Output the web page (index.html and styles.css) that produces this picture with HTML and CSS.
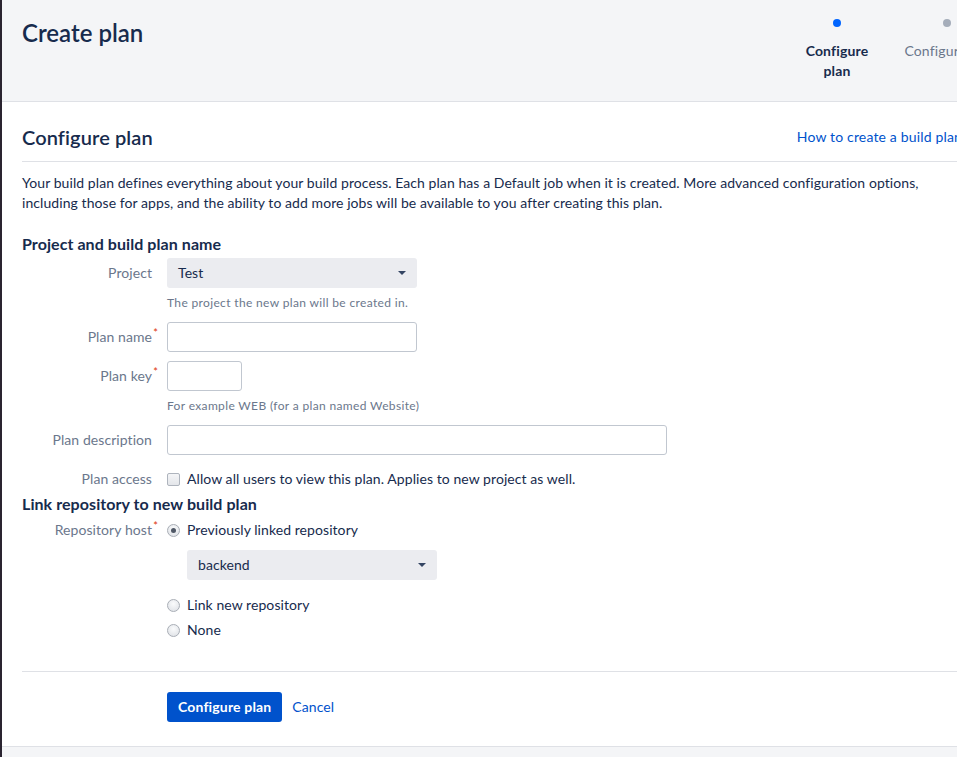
FILE: index.html
```html
<!DOCTYPE html>
<html>
<head>
<meta charset="utf-8">
<link rel="stylesheet" href="styles.css">
</head>
<body>
<div class="frame">
  <div class="page">
    <header class="page-header">
      <h1 class="page-title">Create plan</h1>
      <ol class="steps">
        <li class="step step-current"><span class="step-dot"></span><span class="step-label">Configure plan</span></li>
        <li class="step"><span class="step-dot"></span><span class="step-label">Configure job</span></li>
      </ol>
    </header>
    <main class="panel">
      <div class="panel-head">
        <h2 class="panel-title">Configure plan</h2>
        <a class="link help-link" href="#">How to create a build plan</a>
      </div>
      <p class="intro">Your build plan defines everything about your build process. Each plan has a Default job when it is created. More advanced configuration options, including those for apps, and the ability to add more jobs will be available to you after creating this plan.</p>

      <h3 class="section-title first">Project and build plan name</h3>
      <div class="field field-project">
        <label class="field-label">Project</label>
        <div class="select select-project"><span>Test</span><span class="caret"></span></div>
      </div>
      <div class="help">The project the new plan will be created in.</div>

      <div class="field field-gap">
        <label class="field-label">Plan name<span class="req">*</span></label>
        <div class="input input-long"></div>
      </div>
      <div class="field field-gap">
        <label class="field-label">Plan key<span class="req">*</span></label>
        <div class="input input-short"></div>
      </div>
      <div class="help">For example WEB (for a plan named Website)</div>
      <div class="field field-gap">
        <label class="field-label">Plan description</label>
        <div class="input input-full"></div>
      </div>
      <div class="field field-check">
        <label class="field-label">Plan access</label>
        <div class="choice"><span class="checkbox"></span><span>Allow all users to view this plan. Applies to new project as well.</span></div>
      </div>

      <h3 class="section-title second">Link repository to new build plan</h3>
      <div class="field field-radio-first">
        <label class="field-label">Repository host<span class="req">*</span></label>
        <div class="choice"><span class="radio radio-on"></span><span>Previously linked repository</span></div>
      </div>
      <div class="nested">
        <div class="select select-repo"><span>backend</span><span class="caret"></span></div>
      </div>
      <div class="indent choice choice-link"><span class="radio"></span><span>Link new repository</span></div>
      <div class="indent choice choice-none"><span class="radio"></span><span>None</span></div>

      <div class="actions">
        <button class="btn-primary" type="button">Configure plan</button>
        <a class="link cancel" href="#">Cancel</a>
      </div>
    </main>
    <div class="page-foot"></div>
  </div>
</div>
</body>
</html>
```

FILE: styles.css
```css
html, body {
  margin: 0;
  padding: 0;
  background: #f4f5f7;
  overflow: hidden;
}
body {
  font-family: Lato, "Open Sans", sans-serif;
  font-size: 14px;
  line-height: 20px;
  letter-spacing: 0.07px;
  color: #172b4d;
}
.frame {
  border-left: 2px solid #2a2430;
  height: 757px;
  overflow: hidden;
}
.page {
  width: 1000px;
}
.page-header {
  display: flex;
  align-items: flex-start;
  height: 102px;
  box-sizing: border-box;
  padding: 0 0 0 20px;
  background: #f4f5f7;
  border-bottom: 1px solid #dfe1e6;
}
.page-title {
  margin: 19px 0 0;
  font-size: 24px;
  line-height: 28px;
  font-weight: 600;
  letter-spacing: 0;
  color: #172b4d;
}
.steps {
  margin: 0 0 0 auto;
  padding: 0;
  list-style: none;
  display: flex;
}
.step {
  width: 110px;
  display: flex;
  flex-direction: column;
  align-items: center;
  padding-top: 19px;
  color: #6b778c;
  text-align: center;
  letter-spacing: 0.16px;
}
.step-dot {
  width: 8px;
  height: 8px;
  border-radius: 50%;
  background: #a5adba;
}
.step-label {
  margin-top: 14px;
  width: 88px;
}
.step-current {
  color: #172b4d;
  font-weight: 700;
}
.step-current .step-dot {
  background: #0065ff;
}
.panel {
  background: #fff;
  padding: 0 40px 0 20px;
  height: 645px;
  box-sizing: border-box;
  border-bottom: 1px solid #dfe1e6;
}
.panel-head {
  display: flex;
  align-items: center;
  justify-content: space-between;
  padding-top: 23px;
  padding-bottom: 12px;
  border-bottom: 1px solid #dfe1e6;
}
.panel-title {
  margin: 0;
  font-size: 20px;
  line-height: 24px;
  font-weight: 600;
  letter-spacing: 0.1px;
}
.link {
  color: #0052cc;
  text-decoration: none;
}
.help-link {
  margin-top: 0;
  letter-spacing: 0.16px;
}
.intro {
  margin: 11px 0 0;
}
.section-title {
  margin: 0;
  font-size: 16px;
  line-height: 20px;
  font-weight: 700;
}
.section-title.first { margin-top: 21px; }
.section-title.second { margin-top: 5px; }
.field {
  display: flex;
  align-items: center;
}
.field-label {
  position: relative;
  width: 130px;
  margin-right: 15px;
  text-align: right;
  color: #6b778c;
}
.req {
  position: absolute;
  right: -6px;
  top: -4px;
  color: #de350b;
  font-size: 11px;
}
.field-project { margin-top: 4px; }
.field-gap { margin-top: 9px; }
.field-check { margin-top: 14px; }
.field-radio-first { margin-top: 6px; }
.select {
  height: 30px;
  box-sizing: border-box;
  background: #ebecf0;
  border-radius: 3px;
  display: flex;
  align-items: center;
  justify-content: space-between;
  padding: 0 11px;
  width: 250px;
}
.caret {
  width: 0;
  height: 0;
  border-left: 4px solid transparent;
  border-right: 4px solid transparent;
  border-top: 4px solid #344563;
}
.help {
  margin: 5px 0 0 145px;
  font-size: 12px;
  letter-spacing: 0.35px;
  color: #6b778c;
}
.input {
  height: 30px;
  box-sizing: border-box;
  border: 1px solid #c1c7d0;
  border-radius: 3px;
  background: #fff;
}
.input-long { width: 250px; }
.input-short { width: 75px; }
.input-full { width: 500px; }
.choice {
  display: flex;
  align-items: center;
}
.checkbox {
  width: 11px;
  height: 11px;
  margin-right: 7px;
  border: 1px solid #aeb4bd;
  border-radius: 2px;
  background: linear-gradient(#f4f5f7, #e4e6ea);
}
.radio {
  width: 11px;
  height: 11px;
  margin-right: 7px;
  border: 1px solid #a9aeb6;
  border-radius: 50%;
  background: radial-gradient(circle at 50% 35%, #fafbfc, #dcdfe4);
  position: relative;
}
.radio-on::after {
  content: "";
  position: absolute;
  left: 3px;
  top: 3px;
  width: 5px;
  height: 5px;
  border-radius: 50%;
  background: #505866;
}
.nested {
  margin: 10px 0 0 165px;
}
.indent {
  margin-left: 145px;
}
.choice-link { margin-top: 15px; }
.choice-none { margin-top: 5px; }
.actions {
  margin-top: 31px;
  border-top: 1px solid #dfe1e6;
  padding: 20px 0 0 145px;
  display: flex;
  align-items: center;
}
.btn-primary {
  height: 30px;
  padding: 0 11px;
  border: 0;
  border-radius: 3px;
  background: #0052cc;
  color: #fff;
  font: 700 14px/20px Lato, "Open Sans", sans-serif;
  letter-spacing: 0.16px;
  margin-right: 10px;
}
.page-foot {
  height: 20px;
  background: #f4f5f7;
}
```
